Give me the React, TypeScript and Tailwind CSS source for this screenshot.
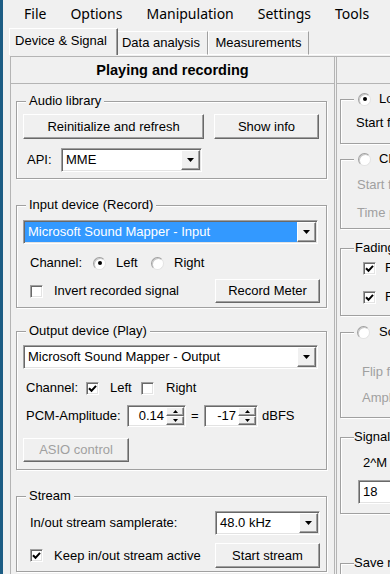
import React from 'react';

// --- 3D bevel styles (classic Windows look) ---
const raised =
    'bg-[#f0f0f0] border border-t-white border-l-white border-r-[#696969] border-b-[#696969] shadow-[inset_-1px_-1px_0_#a0a0a0]';
const sunken =
    'bg-white border border-t-[#a0a0a0] border-l-[#a0a0a0] border-r-white border-b-white shadow-[inset_1px_1px_0_#696969,inset_-1px_-1px_0_#e3e3e3]';
const etched = 'border border-[#a0a0a0] shadow-[inset_1px_1px_0_#fff,1px_1px_0_#fff]';

const Button: React.FC<{ className: string; disabled?: boolean; children: React.ReactNode }> = ({ className, disabled, children }) => (
    <div className={`${raised} shrink-0 flex items-center justify-center ${disabled ? 'text-[#a0a0a0]' : 'text-black'} ${className}`}>
        {children}
    </div>
);

const DownArrow: React.FC = () => (
    <svg width="7" height="4" viewBox="0 0 7 4"><polygon points="0,0 7,0 3.5,4" fill="#000" /></svg>
);

const Combo: React.FC<{ className: string; text: string; selected?: boolean }> = ({ className, text, selected }) => (
    <div className={`${sunken} shrink-0 flex p-[1px] ${className}`}>
        <div className={`flex-1 min-w-0 flex items-center pl-[3px] whitespace-nowrap overflow-hidden ${selected ? 'bg-[#3399ff] text-white' : ''}`}>
            {text}
        </div>
        <div className={`${raised} w-[19px] shrink-0 flex items-center justify-center`}>
            <DownArrow />
        </div>
    </div>
);

const SpinArrows: React.FC = () => (
    <div className="w-[18px] shrink-0 flex flex-col">
        <div className={`${raised} flex-1 flex items-center justify-center`}>
            <svg width="5" height="3" viewBox="0 0 5 3"><polygon points="0,3 5,3 2.5,0" fill="#000" /></svg>
        </div>
        <div className={`${raised} flex-1 flex items-center justify-center`}>
            <svg width="5" height="3" viewBox="0 0 5 3"><polygon points="0,0 5,0 2.5,3" fill="#000" /></svg>
        </div>
    </div>
);

const Spin: React.FC<{ className: string; value: string; left?: boolean }> = ({ className, value, left }) => (
    <div className={`${sunken} shrink-0 flex p-[1px] ${className}`}>
        <div className={`flex-1 flex items-center ${left ? 'pl-[3px]' : 'justify-end pr-[2px]'}`}>{value}</div>
        <SpinArrows />
    </div>
);

const Check: React.FC<{ checked?: boolean }> = ({ checked }) => (
    <div className={`${sunken} size-[13px] shrink-0 flex items-center justify-center`}>
        {checked && (
            <svg width="9" height="9" viewBox="0 0 9 9">
                <path d="M1 4.2 L3.5 6.8 L8 1.8" fill="none" stroke="#000" strokeWidth="2" />
            </svg>
        )}
    </div>
);

const Radio: React.FC<{ checked?: boolean }> = ({ checked }) => (
    <div className="size-[13px] shrink-0 rounded-full bg-white border border-t-[#a0a0a0] border-l-[#a0a0a0] border-r-[#e3e3e3] border-b-[#e3e3e3] shadow-[inset_1px_1px_0_#c8c8c8] flex items-center justify-center">
        {checked && <div className="size-[4px] rounded-full bg-black" />}
    </div>
);

// --- Left panel ---
const LeftColumn: React.FC = () => (
    <div className="w-[324px] shrink-0 flex flex-col border-r border-[#b4b4b4]">
        <div className="h-[27px] shrink-0 border-b border-[#b4b4b4] flex items-center justify-center font-bold text-[14.5px]">
            Playing and recording
        </div>
        <div className="pl-[5px] pt-[9px]">
            <fieldset className={`w-[311px] ${etched} px-[6px] pb-[6px]`}>
                <legend className="ml-[3px] px-[3px] bg-[#f0f0f0]">Audio library</legend>
                <div className="pt-[5px] flex gap-[10px]">
                    <Button className="w-[181px] h-[25px]">Reinitialize and refresh</Button>
                    <Button className="w-[105px] h-[25px]">Show info</Button>
                </div>
                <div className="mt-[9px] h-[24px] flex items-center">
                    <span className="w-[38px] pl-[4px]">API:</span>
                    <Combo className="w-[141px] h-[24px]" text="MME" />
                </div>
            </fieldset>

            <fieldset className={`mt-[18px] w-[311px] ${etched} px-[6px] pb-[4px]`}>
                <legend className="ml-[3px] px-[3px] bg-[#f0f0f0]">Input device (Record)</legend>
                <div className="pt-[7px]">
                    <Combo className="w-[295px] h-[24px]" text="Microsoft Sound Mapper - Input" selected />
                </div>
                <div className="mt-[9px] h-[20px] flex items-center">
                    <span className="ml-[7px] w-[63px]">Channel:</span>
                    <Radio checked />
                    <span className="ml-[10px] w-[35px]">Left</span>
                    <Radio />
                    <span className="ml-[10px]">Right</span>
                </div>
                <div className="mt-[6px] h-[24px] flex items-center">
                    <span className="ml-[7px]"><Check /></span>
                    <span className="ml-[11px]">Invert recorded signal</span>
                    <Button className="ml-auto w-[105px] h-[24px]">Record Meter</Button>
                </div>
            </fieldset>

            <fieldset className={`mt-[15px] w-[311px] ${etched} px-[6px] pb-[7px]`}>
                <legend className="ml-[3px] px-[3px] bg-[#f0f0f0]">Output device (Play)</legend>
                <div className="pt-[6px]">
                    <Combo className="w-[295px] h-[24px]" text="Microsoft Sound Mapper - Output" />
                </div>
                <div className="mt-[9px] h-[20px] flex items-center">
                    <span className="ml-[3px] w-[60px]">Channel:</span>
                    <Check checked />
                    <span className="ml-[11px] w-[31px]">Left</span>
                    <Check />
                    <span className="ml-[12px]">Right</span>
                </div>
                <div className="mt-[7px] h-[22px] flex items-center">
                    <span className="ml-[3px] w-[101px]">PCM-Amplitude:</span>
                    <Spin className="w-[59px] h-[22px]" value="0.14" />
                    <span className="ml-[5px] w-[13px]">=</span>
                    <Spin className="w-[54px] h-[22px]" value="-17" />
                    <span className="ml-[4px]">dBFS</span>
                </div>
                <div className="mt-[11px]">
                    <Button className="w-[106px] h-[24px]" disabled>ASIO control</Button>
                </div>
            </fieldset>

            <fieldset className={`mt-[18px] w-[311px] ${etched} px-[6px] pb-[3px]`}>
                <legend className="ml-[3px] px-[3px] bg-[#f0f0f0]">Stream</legend>
                <div className="pt-[7px] h-[31px] flex items-end">
                    <div className="h-[24px] flex items-center flex-1">
                        <span className="ml-[7px]">In/out stream samplerate:</span>
                        <Combo className="ml-auto w-[105px] h-[24px]" text="48.0 kHz" />
                    </div>
                </div>
                <div className="mt-[8px] h-[25px] flex items-center">
                    <span className="ml-[7px]"><Check checked /></span>
                    <span className="ml-[11px]">Keep in/out stream active</span>
                    <Button className="ml-auto w-[105px] h-[25px]">Start stream</Button>
                </div>
            </fieldset>
        </div>
    </div>
);

// --- Right panel (clipped by the window edge) ---
const RightColumn: React.FC = () => (
    <div className="flex-1 min-w-0 ml-[1px] border-l border-[#b4b4b4] overflow-hidden flex flex-col">
        <div className="h-[27px] shrink-0 border-b border-[#b4b4b4]" />
        <div className="pl-[3px] whitespace-nowrap">
            <fieldset className={`mt-[7px] w-[160px] ${etched} pl-[13px] pb-[12px]`}>
                <legend className="pl-[4px] pr-[2px] bg-[#f0f0f0] flex items-center">
                    <Radio checked />
                    <span className="ml-[8px]">Load from file</span>
                </legend>
                <div className="pt-[8px] h-[24px] flex items-end"><span className="ml-[2px]">Start from sample</span></div>
            </fieldset>

            <fieldset className={`mt-[7px] w-[160px] ${etched} pl-[13px] pb-[7px] text-[#a0a0a0]`}>
                <legend className="pl-[4px] pr-[2px] bg-[#f0f0f0] flex items-center text-black">
                    <Radio />
                    <span className="ml-[8px]">Chirp signal</span>
                </legend>
                <div className="pt-[10px]"><div className="ml-[3px] h-[16px]">Start frequency</div></div>
                <div className="mt-[12px] ml-[3px] h-[16px]">Time period</div>
            </fieldset>

            <fieldset className={`mt-[11px] w-[160px] ${etched} pl-[13px] pb-[10px]`}>
                <legend className="pl-[1px] pr-[2px] bg-[#f0f0f0]">Fading</legend>
                <div className="pt-[4px]">
                    <div className="h-[16px] flex items-center">
                        <span className="ml-[9px]"><Check checked /></span>
                        <span className="ml-[9px]">Fade in</span>
                    </div>
                </div>
                <div className="mt-[13px] h-[16px] flex items-center">
                    <span className="ml-[9px]"><Check checked /></span>
                    <span className="ml-[9px]">Fade out</span>
                </div>
            </fieldset>

            <fieldset className={`mt-[8px] w-[160px] ${etched} pl-[13px] pb-[11px] text-[#a0a0a0]`}>
                <legend className="pl-[3px] pr-[2px] bg-[#f0f0f0] flex items-center text-black">
                    <Radio />
                    <span className="ml-[9px]">Sound file</span>
                </legend>
                <div className="pt-[24px]"><div className="ml-[8px] h-[16px]">Flip file</div></div>
                <div className="mt-[10px] ml-[8px] h-[16px]">Amplitude</div>
            </fieldset>

            <fieldset className={`mt-[11px] w-[160px] ${etched} pl-[13px] pb-[9px]`}>
                <legend className="pr-[2px] bg-[#f0f0f0]">Signal length</legend>
                <div className="pt-[10px]"><div className="ml-[9px] h-[16px]">2^M samples</div></div>
                <div className="mt-[9px] ml-[4px]">
                    <Spin className="w-[52px] h-[24px]" value="18" left />
                </div>
            </fieldset>

            <fieldset className={`mt-[41px] w-[160px] ${etched} pl-[13px] pb-[10px]`}>
                <legend className="pr-[2px] bg-[#f0f0f0]">Save recording</legend>
                <div className="h-[20px]" />
            </fieldset>
        </div>
    </div>
);

export default function App() {
    return (
        <div className="w-[390px] h-[574px] overflow-hidden flex bg-[#f0f0f0] text-black font-['Liberation_Sans',Arial,sans-serif] text-[13px] leading-[16px]">
            <div className="w-[3px] shrink-0 bg-[#1d5d84]" />
            <div className="flex-1 min-w-0 flex flex-col">
                <div className="h-[27px] shrink-0 flex items-center gap-[24px] pl-[21px] font-['Noto_Sans',sans-serif] text-[14px]">
                    {['File', 'Options', 'Manipulation', 'Settings', 'Tools'].map(m => (
                        <span key={m}>{m}</span>
                    ))}
                </div>
                <div className="h-[28px] shrink-0 flex items-end pl-[6px] whitespace-nowrap">
                    <div className="w-[109px] h-[27px] shrink-0 flex items-center justify-center pb-[2px] pr-[5px] border-t border-l border-r border-t-white border-l-white border-r-[#696969] shadow-[inset_-1px_0_0_#a0a0a0]">
                        Device &amp; Signal
                    </div>
                    <div className="w-[90px] h-[24px] shrink-0 flex items-center justify-center pr-[3px] border-t border-r border-b border-t-white border-r-[#a0a0a0] border-b-white">
                        Data analysis
                    </div>
                    <div className="w-[101px] h-[24px] shrink-0 flex items-center justify-center border-t border-l border-r border-b border-t-white border-l-white border-r-[#a0a0a0] border-b-white">
                        Measurements
                    </div>
                    <div className="flex-1 h-[24px] border-b border-b-white" />
                </div>
                <div className="flex-1 min-h-0 ml-[7px] mt-[1px] flex border-l border-t border-[#b4b4b4]">
                    <LeftColumn />
                    <RightColumn />
                </div>
            </div>
        </div>
    );
}
